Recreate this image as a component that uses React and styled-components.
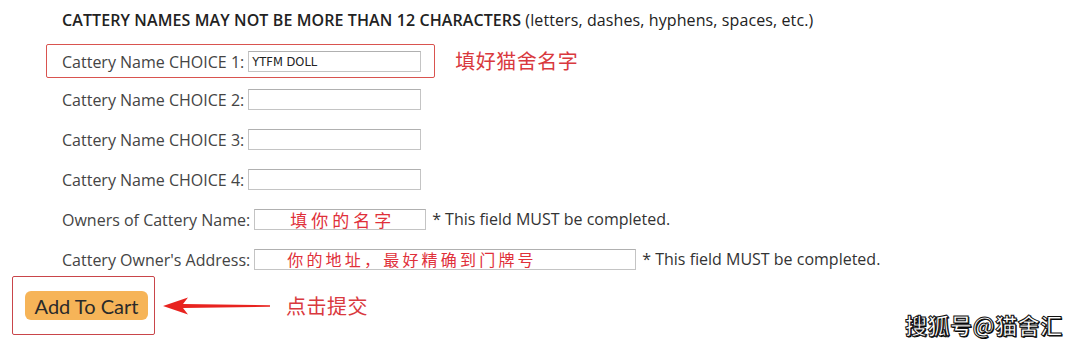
import React from "react";
import styled, { createGlobalStyle } from "styled-components";

const Global = createGlobalStyle`
  html, body { margin: 0; padding: 0; background: #fff; }
  body { font-family: "Open Sans", "Noto Sans", sans-serif; }
`;

const Page = styled.div`
  position: relative;
  width: 1080px;
  height: 345px;
  overflow: hidden;
  background: #fff;
`;

const Heading = styled.div`
  height: 40px;
  display: flex;
  align-items: center;
  padding-left: 62px;
  font-size: 16px;
  color: #222;
  white-space: nowrap;
  letter-spacing: 0.1px;
`;

const Caps = styled.span`
  font-weight: 600;
`;

const Rows = styled.div`
  display: flex;
  flex-direction: column;
  padding-left: 46px;
  margin-top: -1px;
`;

const Row = styled.div`
  height: 40px;
  display: flex;
  align-items: center;
`;

const Field = styled.div`
  display: flex;
  align-items: center;
  height: 34px;
  box-sizing: border-box;
  padding: 1px 13px 0 15px;
  border: 1px solid ${(p) => (p.$highlight ? "#d9534f" : "transparent")};
  border-radius: 2px;
  margin-top: ${(p) => (p.$highlight ? "4px" : "0")};
`;

const Label = styled.label`
  font-size: 16px;
  color: #444;
  white-space: nowrap;
  margin-right: 4px;
`;

const Input = styled.div`
  box-sizing: border-box;
  width: ${(p) => p.$w}px;
  height: 21px;
  border: 1px solid #c4c4c4;
  border-top-color: #b0b0b0;
  background: #fff;
  display: flex;
  align-items: center;
  padding-left: ${(p) => p.$pad || 3}px;
  font-family: "DejaVu Sans", "Liberation Sans", sans-serif;
  font-size: 11.5px;
  color: #222;
  white-space: nowrap;
`;

const Handwritten = styled.span`
  font-family: "Noto Sans CJK SC", sans-serif;
  font-size: ${(p) => p.$fs}px;
  color: #e0303a;
  letter-spacing: ${(p) => p.$ls}px;
  line-height: 19px;
`;

const Note = styled.span`
  font-size: 16px;
  color: #333;
  margin-left: ${(p) => p.$ml || 5}px;
  white-space: nowrap;
`;

const Annotation = styled.span`
  font-family: "Noto Sans CJK SC", sans-serif;
  font-size: 20px;
  color: #d9393e;
  margin-left: ${(p) => p.$ml}px;
  margin-top: ${(p) => p.$mt || 0}px;
  white-space: nowrap;
  letter-spacing: 0.5px;
`;

const SubmitRow = styled.div`
  display: flex;
  align-items: center;
  padding-left: 12px;
  margin-top: -3px;
`;

const ButtonBox = styled.div`
  box-sizing: border-box;
  width: 143px;
  height: 59px;
  border: 1px solid #c9454a;
  border-radius: 2px;
  display: flex;
  align-items: center;
  padding-left: 12px;
`;

const CartButton = styled.button`
  width: 123px;
  height: 29px;
  border: none;
  border-radius: 6px;
  background: #f6b458;
  color: #2a2a2a;
  font-family: "Lato", "Open Sans", sans-serif;
  font-size: 20px;
  padding: 0;
  cursor: pointer;
`;

const Arrow = styled.svg`
  margin-left: 7px;
  display: block;
`;

const Watermark = styled.div`
  position: absolute;
  left: 905px;
  top: 308px;
  font-family: "Noto Sans CJK SC", sans-serif;
  font-size: 22px;
  font-weight: 700;
  color: #fff;
  letter-spacing: 0.5px;
  -webkit-text-stroke: 1px #111;
  text-shadow: 1px 1px 0 #000;
  white-space: nowrap;
`;

const choices = ["YTFM DOLL", "", "", ""];

export default function App() {
  return (
    <Page>
      <Global />
      <Heading>
        <Caps>CATTERY NAMES MAY NOT BE MORE THAN 12 CHARACTERS</Caps>
        &nbsp;(letters, dashes, hyphens, spaces, etc.)
      </Heading>
      <Rows>
        {choices.map((v, i) => (
          <Row key={i}>
            <Field $highlight={i === 0}>
              <Label>Cattery Name CHOICE {i + 1}:</Label>
              <Input $w={173}>{v}</Input>
            </Field>
            {i === 0 && (
              <Annotation $ml={20} $mt={2}>
                填好猫舍名字
              </Annotation>
            )}
          </Row>
        ))}
        <Row>
          <Field>
            <Label>Owners of Cattery Name:</Label>
            <Input $w={172} $pad={35}>
              <Handwritten $fs={17} $ls={4}>填你的名字</Handwritten>
            </Input>
          </Field>
          <Note $ml={-8}>* This field MUST be completed.</Note>
        </Row>
        <Row>
          <Field>
            <Label>Cattery Owner's Address:</Label>
            <Input $w={382} $pad={32}>
              <Handwritten $fs={16} $ls={3.2}>你的地址，最好精确到门牌号</Handwritten>
            </Input>
          </Field>
          <Note $ml={-8}>* This field MUST be completed.</Note>
        </Row>
      </Rows>
      <SubmitRow>
        <ButtonBox>
          <CartButton>Add To Cart</CartButton>
        </ButtonBox>
        <Arrow width="110" height="20" viewBox="0 0 110 20">
          <path d="M1 10 L26 1.5 L21 8 L108 9.3 L108 10.7 L21 12 L26 18.5 Z" fill="#e8231f" />
        </Arrow>
        <Annotation $ml={14}>点击提交</Annotation>
      </SubmitRow>
      <Watermark>搜狐号@猫舍汇</Watermark>
    </Page>
  );
}
